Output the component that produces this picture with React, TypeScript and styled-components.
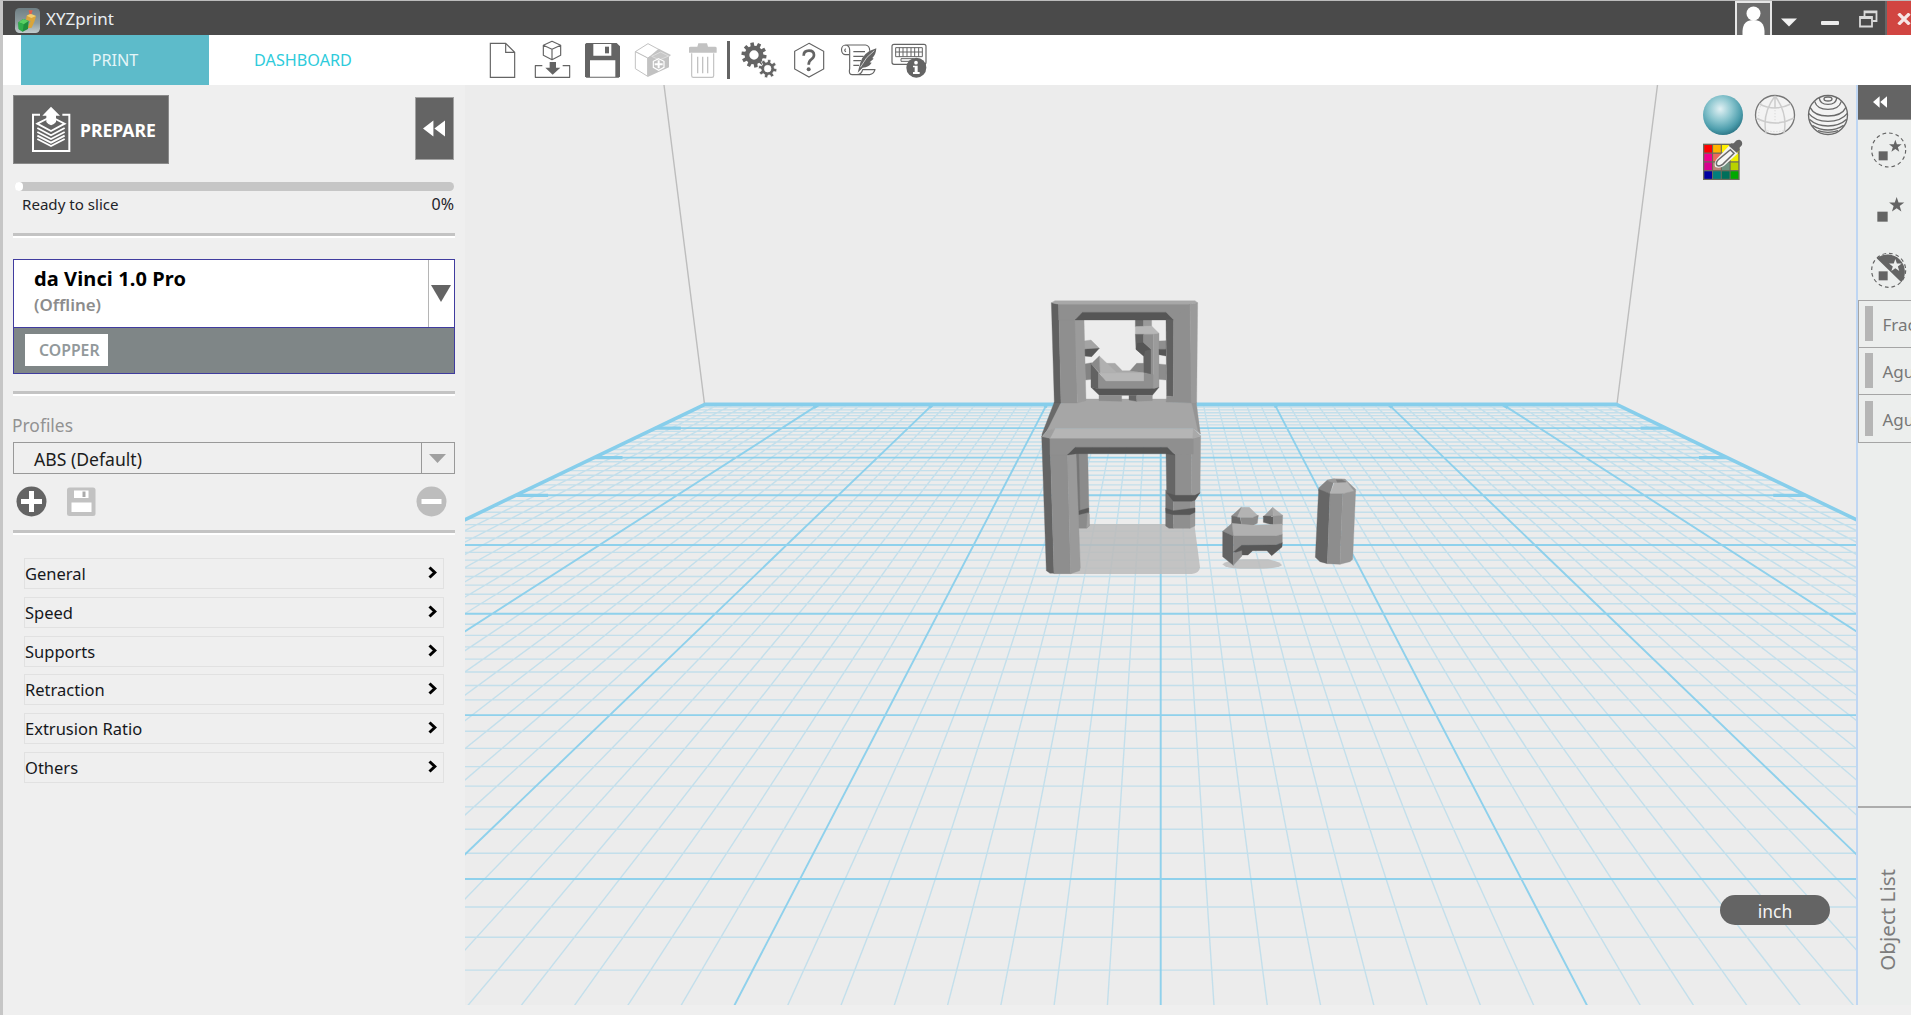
import React from 'react';
import styled, { createGlobalStyle } from 'styled-components';

const GlobalStyle = createGlobalStyle`
  * { box-sizing: border-box; }
  body { margin: 0; background: #efefef; overflow: hidden; }
`;

const FONT = '"Noto Sans", "Open Sans", Lato, sans-serif';
const INK = '#646464';
const FAINT = '#c2c2c2';

const Window = styled.div`
  display: flex;
  flex-direction: column;
  width: 1911px;
  height: 1015px;
  overflow: hidden;
  border-left: 3px solid #c6c6c6;
  border-top: 1px solid #bcbcbc;
  background: #efefef;
  font-family: ${FONT};
  white-space: nowrap;
`;

/* ---------- title bar ---------- */

const TitleBar = styled.header`
  display: flex;
  flex: none;
  height: 34px;
  padding-left: 12px;
  background: #4a4a4a;
`;

const AppTitle = styled.h1`
  flex: 1;
  margin: 0 0 0 6px;
  font-size: 17px;
  font-weight: 400;
  line-height: 36px;
  color: #e9eef2;
`;

const AppLogo = styled.svg`
  width: 25px;
  height: 25px;
  margin-top: 7px;
`;

const Avatar = styled.svg`
  width: 37px;
  height: 34px;
`;

const WindowButton = styled.button<{ $w: number; $close?: boolean; $pad?: string }>`
  display: flex;
  align-items: center;
  justify-content: ${p => (p.$close ? 'flex-start' : 'center')};
  flex: none;
  width: ${p => p.$w}px;
  height: 34px;
  padding: ${p => p.$pad ?? '0'};
  border: 0;
  border-left: ${p => (p.$close ? '2px solid #666' : '0')};
  background: ${p => (p.$close ? '#d14541' : 'transparent')};
  svg { flex: none; }
`;

/* ---------- navigation and toolbar ---------- */

const NavBar = styled.nav`
  display: flex;
  flex: none;
  height: 50px;
  padding-left: 18px;
  background: #fff;
`;

const Tab = styled.button<{ $active?: boolean }>`
  width: 188px;
  height: 50px;
  padding: 1px 0 0;
  border: 0;
  font-family: ${FONT};
  font-size: 16.2px;
  line-height: 49px;
  background: ${p => (p.$active ? '#5dbbca' : '#fff')};
  color: ${p => (p.$active ? '#e4f5f8' : '#2ecbdb')};
`;

const Toolbar = styled.div`
  display: flex;
  margin-left: 80px;
`;

const ToolIcon = styled.svg`
  flex: none;
  width: 50px;
  height: 50px;
`;

const ToolSeparator = styled.span`
  width: 3px;
  height: 38px;
  margin: 6px 4px 0 0;
  background: ${INK};
`;

/* ---------- body ---------- */

const Body = styled.main`
  display: flex;
  flex: none;
  height: 920px;
`;

const Sidebar = styled.aside`
  flex: none;
  width: 462px;
  padding: 10px 10px 0;
  background: #efefef;
`;

const ActionRow = styled.div`
  display: flex;
  justify-content: space-between;
  height: 69px;
  padding-right: 1px;
`;

const PrepareButton = styled.button`
  display: flex;
  width: 156px;
  height: 69px;
  padding: 0;
  border: 1px solid #8a8a8a;
  background: ${INK};
  color: #fff;
  font-family: ${FONT};
  font-size: 17.6px;
  font-weight: 700;
  line-height: 68px;
  svg { flex: none; width: 66px; height: 67px; }
`;

const CollapseButton = styled.button`
  display: flex;
  align-items: center;
  justify-content: center;
  width: 39px;
  height: 63px;
  margin-top: 2px;
  padding: 0 1px 0 0;
  border: 1px solid #a2a2a2;
  background: ${INK};
`;

const ProgressTrack = styled.div`
  height: 9px;
  margin: 18px 1px 0 2px;
  border-radius: 5px;
  background: #c6c6c6;
`;

const ProgressValue = styled.div`
  width: 8px;
  height: 9px;
  border-radius: 4px;
  background: #fff;
`;

const StatusRow = styled.div`
  display: flex;
  justify-content: space-between;
  height: 26px;
  padding: 0 1px 0 9px;
  font-size: 15.1px;
  line-height: 27px;
  color: #1f2429;
  b { font-weight: 400; font-size: 16px; }
`;

const Divider = styled.hr<{ $top: number }>`
  height: 5px;
  margin: ${p => p.$top}px 0 0;
  border: 0;
  border-top: 3px solid #c3c3c3;
  background: #fff;
`;

const PrinterCard = styled.section`
  margin-top: 21px;
  border: 1px solid #403c9f;
`;

const PrinterPick = styled.div`
  display: flex;
  height: 68px;
  border-bottom: 1px solid #403c9f;
  background: #fff;
`;

const PrinterLabel = styled.div`
  flex: 1;
  padding: 7px 0 0 20px;
`;

const PrinterName = styled.div`
  font-size: 20px;
  font-weight: 700;
  line-height: 24px;
  letter-spacing: 0.1px;
  color: #000;
`;

const PrinterState = styled.div`
  font-size: 16.9px;
  font-weight: 600;
  line-height: 28px;
  color: #8c8c8c;
`;

const DropArrow = styled.span<{ $w: number; $tone: string; $line: string }>`
  display: flex;
  align-items: center;
  justify-content: center;
  width: ${p => p.$w}px;
  padding-right: 2px;
  border-left: 1px solid ${p => p.$line};
  color: ${p => p.$tone};
`;

const MaterialBar = styled.div`
  height: 45px;
  padding: 6px 0 0 11px;
  background: #7f8687;
`;

const MaterialChip = styled.span`
  display: block;
  width: 83px;
  height: 32px;
  padding-left: 14px;
  background: #fff;
  font-size: 15.8px;
  font-weight: 600;
  line-height: 33px;
  color: #92999b;
`;

const FieldLabel = styled.label`
  display: block;
  margin: 15px 0 3px -1px;
  font-size: 17.4px;
  line-height: 28px;
  color: #929292;
`;

const ProfileSelect = styled.div`
  display: flex;
  height: 32px;
  border: 1px solid #999;
`;

const ProfileValue = styled.span`
  flex: 1;
  padding-left: 20px;
  font-size: 17.6px;
  line-height: 32px;
  color: #1c1c1c;
`;

const ProfileActions = styled.div`
  display: flex;
  height: 31px;
  margin-top: 12px;
  padding: 0 8px 0 3px;
  svg { flex: none; width: 31px; height: 31px; }
  svg:nth-child(2) { margin-left: 19px; }
  svg:last-child { margin-left: auto; }
`;

const SettingList = styled.div`
  display: flex;
  flex-direction: column;
  gap: 7.75px;
  margin-top: 23px;
  padding: 0 11px;
`;

const SettingRow = styled.button`
  display: flex;
  align-items: center;
  justify-content: space-between;
  height: 31px;
  padding: 1px 6px 0 0;
  border: 1px solid #e1e1e1;
  background: #efefef;
  font-family: ${FONT};
  font-size: 16.5px;
  line-height: 28px;
  color: #16181c;
  svg { margin-top: -3px; }
`;

/* ---------- viewport ---------- */

const Viewport = styled.section`
  position: relative;
  flex: 1;
  overflow: hidden;
  background: #ececec;
`;

const Scene = styled.svg`
  display: block;
  width: 1391px;
  height: 920px;
`;

const ViewModes = styled.div`
  position: absolute;
  top: 9px;
  left: 1236.5px;
  display: grid;
  grid-template-columns: repeat(3, 52.5px);
  grid-template-rows: 43px 46px;
  svg { width: 42px; height: 42px; }
  svg:last-child { height: 44px; }
`;

const UnitToggle = styled.button`
  position: absolute;
  left: 1255px;
  top: 810px;
  width: 110px;
  height: 30px;
  padding: 1px 0 0;
  border: 0;
  border-radius: 15px;
  background: ${INK};
  font-family: ${FONT};
  font-size: 17.4px;
  line-height: 30px;
  color: #f4f4f4;
`;

/* ---------- object panel ---------- */

const ObjectPanel = styled.aside`
  display: flex;
  flex-direction: column;
  flex: none;
  width: 55px;
  overflow: hidden;
  border-left: 2px solid #bfd6f3;
  background: #eceeed;
`;

const PanelHeader = styled.div`
  display: flex;
  align-items: center;
  height: 35px;
  padding-left: 15px;
  flex: none;
  background: ${INK};
  border-bottom: 1px solid #8f8f8f;
`;

const SelectIcon = styled.svg`
  flex: none;
  width: 53px;
  height: 60px;
`;

const ObjectItems = styled.ul`
  flex: 1;
  margin: 0;
  padding: 0;
  list-style: none;
`;

const ObjectItem = styled.li<{ $first?: boolean }>`
  display: flex;
  align-items: center;
  height: 47.5px;
  padding-left: 6px;
  border-left: 1px solid #a5a5a5;
  border-bottom: 1px solid #a5a5a5;
  box-shadow: ${p => (p.$first ? 'inset 0 1px #a5a5a5' : 'none')};
  font-size: 17px;
  line-height: 40px;
  color: #777;
  &::before {
    content: '';
    flex: none;
    width: 8px;
    height: 35px;
    margin-right: 9.5px;
    background: #b5b5b5;
  }
`;

const ObjectName = styled.span`
  padding-top: 3px;
`;

const PanelFooter = styled.div`
  display: flex;
  align-items: center;
  height: 199px;
  padding: 27px 0 0 16px;
  border-top: 2px solid #acacac;
`;

const PanelTitle = styled.span`
  writing-mode: vertical-rl;
  transform: rotate(180deg);
  font-size: 20.6px;
  line-height: 26px;
  color: #7c7c7c;
`;

/* ---------- drawing helpers ---------- */

const gear = (cx: number, cy: number, r: number, ri: number, n: number, turn = 0) => {
  const pts: string[] = [];
  for (let i = 0; i < n; i++) {
    const a = (i / n) * Math.PI * 2 + turn;
    const s = (Math.PI * 2) / n;
    [[-0.32, ri], [-0.22, r], [0.22, r], [0.32, ri]].forEach(([o, q]) => {
      pts.push(`${(cx + Math.cos(a + o * s) * q).toFixed(1)},${(cy + Math.sin(a + o * s) * q).toFixed(1)}`);
    });
  }
  return `M${pts.join('L')}Z`;
};
const hole = (cx: number, cy: number, r: number) =>
  `M${cx - r},${cy}a${r},${r} 0 1 0 ${r * 2},0a${r},${r} 0 1 0 ${-r * 2},0Z`;

const star = (cx: number, cy: number, r: number) =>
  Array.from({ length: 10 }, (_, i) => {
    const q = i % 2 ? r * 0.4 : r;
    const a = -Math.PI / 2 + (i * Math.PI) / 5;
    return `${(cx + q * Math.cos(a)).toFixed(1)},${(cy + q * Math.sin(a)).toFixed(1)}`;
  }).join(' ');

/* Perspective of the build plate: depth k runs from the rear edge, m sideways from the centre. */
const py = (k: number) => 185.1 + 2243.5 / (10.233 - k);
const px = (m: number, k: number) => 1160.7 + (m * 1166) / (10.233 - k);
const NEAR = 7.6;

function BuildPlate() {
  const minor: string[] = [];
  const major: string[] = [];
  for (let i = 1; i / 8 < NEAR; i++) {
    const k = i / 8;
    (i % 8 ? minor : major).push(`M${px(-4, k)},${py(k)}H${px(4, k)}`);
  }
  for (let i = -31; i < 32; i++) {
    const m = i / 8;
    (i % 8 ? minor : major).push(`M${px(m, 0)},${py(0)}L${px(m, NEAR)},${py(NEAR)}`);
  }
  const stubs = [1, 2, 3].map(k => `M${px(-4, k)},${py(k)}H${px(-3.8, k)}M${px(4, k)},${py(k)}H${px(3.8, k)}`);
  const ticks = [-3, -2, -1, 0, 1, 2, 3].map(m => `M${px(m, 0)},${py(0)}L${px(m, 0.15)},${py(0.15)}`);
  return (
    <g fill="none">
      <path d="M664,85L704.5,404M1657.5,85L1617,404" stroke="#bdbdbd" strokeWidth="1.4" />
      <path d={minor.join('')} stroke="#87ceeb" strokeOpacity=".4" strokeWidth="1.4" />
      <path d={major.join('')} stroke="#87ceeb" strokeOpacity=".92" strokeWidth="1.9" />
      <path d={stubs.join('') + ticks.join('')} stroke="#87ceeb" strokeWidth="3.2" />
      <path
        d={`M${px(-4, 4)},${py(4)}L${px(-4, 0)},${py(0)}H${px(4, 0)}L${px(4, 4)},${py(4)}`}
        stroke="#87ceeb"
        strokeWidth="3.6"
        strokeLinejoin="round"
      />
    </g>
  );
}

type Face = [fill: string, points: string];

const MODEL: Face[] = [
  // rear legs
  ['#8b8b8b', '168,515 203,515 208,738 200,745 172,745'],
  ['#767676', '168,515 176,515 180,690 172,690'],
  ['#a0a0a0', '203,700 208,703 208,738 200,743'],
  ['#5a5a5a', '176,692 206,684 206,697 176,704'],
  ['#707070', '437,630 460,640 460,745 447,745 437,738'],
  ['#8f8f8f', '460,640 510,640 510,745 460,745'],
  ['#989898', '510,640 525,640 525,738 510,745'],
  ['#575757', '437,685 460,692 525,684 525,697 510,704 460,704 438,699'],
  // front right leg
  ['#8f8f8f', '465,470 515,470 515,650 465,650'],
  ['#989898', '515,470 542,468 540,640 527,650 515,650'],
  ['#666666', '438,518 465,522 465,650 440,640'],
  ['#575757', '440,638 465,646 525,646 540,638 525,661 515,664 460,664'],
  // front left leg
  ['#646464', '65,468 90,474 102,880 90,880 79,872'],
  ['#8e8e8e', '90,474 142,474 152,881 102,881'],
  ['#9a9a9a', '142,522 168,518 181,862 179,872 152,881'],
  // apron
  ['#8f8f8f', '90,474 520,474 520,522 465,524 442,502 165,502 142,525 90,525'],
  ['#565656', '142,525 165,502 442,502 465,525 438,521 170,521'],
  // seat
  ['#6a6a6a', '103,366 124,368 90,440 66,470 66,462'],
  ['#a6a6a6', '122,370 172,366 197,357 440,357 440,366 515,368 525,372 541,462 520,446 105,446 78,458'],
  ['#959595', '515,368 529,368 541,462 534,452'],
  ['#b5b5b5', '105,446 520,446 542,468 518,475 90,475 78,468'],
  ['#9f9f9f', '66,470 82,452 105,446 90,475'],
  ['#a9a9a9', '520,446 542,468 518,475'],
  // lattice in the back rest
  ['#a4a4a4', '191,183 213,180 238,205 191,208'],
  ['#565656', '191,208 238,205 215,230 191,228'],
  ['#838383', '194,252 215,248 215,298 196,300'],
  ['#a8a8a8', '240,250 285,250 307,272 330,272 371,278 371,303 250,303'],
  ['#878787', '330,272 350,250 371,250 371,278'],
  ['#6b6b6b', '346,115 371,115 371,140 346,140'],
  ['#9a9a9a', '371,115 395,115 395,140 371,140'],
  ['#b7b7b7', '346,140 395,138 417,160 400,163 346,163'],
  ['#616161', '346,163 371,163 371,188 393,208 393,285 371,278 371,228 348,208'],
  ['#565656', '352,190 371,188 393,208 375,212 371,228 348,208'],
  ['#8f8f8f', '371,163 400,163 400,325 393,325 393,208 371,188'],
  ['#9b9b9b', '400,163 417,160 417,322 400,325'],
  ['#8f8f8f', '417,183 438,182 438,208 417,208'],
  ['#565656', '417,208 438,208 438,228 417,224'],
  ['#8c8c8c', '417,252 438,254 438,300 417,298'],
  ['#626262', '213,250 236,278 236,326 213,322'],
  ['#8f8f8f', '236,278 258,303 371,303 371,278 400,284 400,326 236,326'],
  ['#b7b7b7', '237,278 290,278 371,278 371,303 258,303'],
  ['#b0b0b0', '238,228 290,278 240,278'],
  ['#8a8a8a', '238,228 240,280 213,252'],
  ['#565656', '213,322 236,326 400,326 417,322 397,346 238,346'],
  ['#8d8d8d', '237,346 305,346 305,364 237,362'],
  ['#666666', '327,346 350,346 350,364 327,360'],
  ['#929292', '350,346 397,346 397,362 350,364'],
  // back rest frame
  ['#606060', '94,68 116,72 123,369 103,369'],
  ['#8f8f8f', '116,72 167,72 172,369 123,369'],
  ['#9b9b9b', '165,119 192,118 198,362 172,369'],
  ['#8f8f8f', '116,72 510,72 510,119 461,119 438,97 187,97 165,120 116,120'],
  ['#a8a8a8', '94,68 105,62 525,62 533,68 510,73 116,73'],
  ['#565656', '165,120 187,97 438,97 461,120'],
  ['#606060', '438,119 461,119 460,350 440,348'],
  ['#8f8f8f', '461,118 510,72 516,369 438,366 440,348 460,350'],
  ['#9a9a9a', '510,73 533,68 530,369 514,369'],
  // small bracket
  ['#b3b3b3', '635,708 664,682 688,682 715,708 695,713 660,713'],
  ['#8f8f8f', '635,708 664,682 650,713'],
  ['#686868', '635,708 660,713 665,735 635,732'],
  ['#8a8a8a', '662,713 697,713 715,706 712,730 697,737 665,735'],
  ['#9b9b9b', '730,710 758,682 760,709'],
  ['#ababab', '758,682 788,706 760,710'],
  ['#5f5f5f', '730,708 760,709 760,735 730,727'],
  ['#929292', '760,709 788,706 787,735 760,737'],
  ['#b0b0b0', '636,730 700,736 787,732 787,763 768,768 640,768'],
  ['#8d8d8d', '608,754 636,730 640,768'],
  ['#636363', '608,754 640,768 640,856 608,830'],
  ['#8b8b8b', '640,768 768,768 787,763 787,790 765,796 665,797 640,816'],
  ['#575757', '640,816 665,796 768,795 787,788 786,801 755,827 741,812 698,812 684,825 662,825'],
  ['#8e8e8e', '640,820 665,812 666,828 640,856'],
  // pillar
  ['#858585', '896,624 922,600 945,597 940,608 930,641 896,632'],
  ['#b3b3b3', '945,604 978,603 1005,632 1000,637 968,641 930,641'],
  ['#9a9a9a', '922,602 940,596 975,597 980,606 940,608'],
  ['#7c7c7c', '948,599 966,599 978,606 952,607'],
  ['#959595', '975,598 1007,628 1005,636'],
  ['#666666', '896,628 930,641 922,851 900,845 886,832'],
  ['#8d8d8d', '930,641 968,641 960,853 922,851'],
  ['#979797', '968,641 1007,632 998,838 990,845 960,853'],
];

function SceneView() {
  return (
    <Scene viewBox="465 85 1391 920">
      <BuildPlate />
      <g transform="translate(1020 280) scale(.33333)">
        <path d="M180,732H523L540,862Q538,880 515,882H100Z" fill="#bcbcbc" opacity=".86" />
        <path d="M607,853Q625,840 670,838H745Q782,845 786,856Q770,866 720,866H660Q620,866 607,853Z" fill="#bcbcbc" opacity=".86" />
        {MODEL.map(([fill, points], i) => (
          <polygon key={i} points={points} fill={fill} stroke={fill} strokeWidth="1" strokeLinejoin="round" />
        ))}
      </g>
    </Scene>
  );
}

function Tools() {
  return (
    <Toolbar>
      <ToolIcon viewBox="21 15 150 150">
        <path d="M61,40H107L134,67V142H61ZM107,40V67H134" fill="#fff" stroke={INK} strokeWidth="3.5" />
      </ToolIcon>
      <ToolIcon viewBox="171 15 150 150">
        <g fill="none" stroke={INK} strokeWidth="3.5" strokeLinejoin="round">
          <path d="M246,34L272,46V76L246,89L220,76V46ZM220,46L246,58L272,46M246,58V89" />
          <path d="M217,107H196V142H299V107H278" />
        </g>
        <path d="M239,96H258V113H271L248,134L226,113H239Z" fill={INK} />
      </ToolIcon>
      <ToolIcon viewBox="321 15 150 150">
        <path d="M349,39H440L450,49V139L446,143H349L345,139V43Z" fill={INK} />
        <path d="M370,42H424V77H370ZM360,91H436V140H360Z" fill="#fff" />
        <path d="M405,50H417V70H405Z" fill={INK} />
      </ToolIcon>
      <ToolIcon viewBox="471 15 150 150">
        <path d="M534,41L573,62L533,84L496,65Z" fill="#fff" stroke={FAINT} strokeWidth="3" />
        <path d="M496,65L533,84V139L496,116Z" fill="#fff" stroke={FAINT} strokeWidth="3" />
        <path d="M566,56L603,75L597,80L597,112L533,141V84Z" fill={FAINT} />
        <path d="M545,79L572,66L596,78L568,90Z" fill="#c8c8c8" stroke="#e8e8e8" strokeWidth="2" />
        <path d="M566,86L582,94V112L566,121L550,112V94Z" fill={FAINT} stroke="#fff" strokeWidth="3.5" />
        <path d="M566,91V115M554,103H578" stroke="#fff" strokeWidth="6" />
      </ToolIcon>
      <ToolIcon viewBox="621 15 150 150">
        <path d="M657,53Q657,50 662,50H682L685,40H711L714,50H735Q740,50 740,54V68H657Z" fill={FAINT} />
        <path d="M665,70V137Q665,142 670,142H726Q731,142 731,137V70" fill="none" stroke={FAINT} strokeWidth="3.5" />
        <path d="M683,80V130M698,80V130M713,80V130" stroke={FAINT} strokeWidth="4" />
      </ToolIcon>
      <ToolSeparator />
      <ToolIcon viewBox="791 15 150 150">
        <path d={gear(851, 75, 38, 28, 10, 0.15) + hole(851, 75, 14)} fill={INK} fillRule="evenodd" />
        <path d={gear(892, 116, 28, 20, 8, 0.2) + hole(892, 116, 10)} fill={INK} stroke="#fff" strokeWidth="2" fillRule="evenodd" />
      </ToolIcon>
      <ToolIcon viewBox="941 15 150 150">
        <path d="M1016,40L1060,64V117L1016,141L973,117V64Z" fill="none" stroke={INK} strokeWidth="3.5" />
        <path d="M1000,77Q1000,62 1016,62Q1031,62 1031,75Q1031,83 1023,88Q1015,93 1015,104" fill="none" stroke={INK} strokeWidth="8" />
        <circle cx="1015" cy="118" r="6" fill={INK} />
      </ToolIcon>
      <ToolIcon viewBox="1091 15 150 150">
        <g fill="none" stroke={INK} strokeWidth="3.5" strokeLinejoin="round">
          <path d="M1186,45H1126A12,14 0 1 0 1126,74H1136M1126,45Q1138,47 1138,60V116Q1134,133 1145,134H1198Q1210,132 1214,119H1177Q1174,133 1160,134M1186,45Q1198,47 1198,62" />
          <path d="M1126,56Q1120,62 1127,65M1149,65H1184M1149,79H1180M1149,92H1172M1149,106H1166" />
        </g>
        <path d="M1218,55Q1180,66 1170,98L1162,128L1177,113Q1196,112 1204,98L1198,97L1210,86L1206,84Q1217,74 1218,55Z" fill={INK} />
        <path d="M1212,62Q1188,78 1170,112" stroke="#fff" strokeWidth="2" fill="none" />
      </ToolIcon>
      <ToolIcon viewBox="1241 15 150 150">
        <rect x="1265" y="43" width="102" height="60" rx="6" fill="#fff" stroke={INK} strokeWidth="3.5" />
        <path d="M1276,53H1356V80H1276ZM1276,66H1356M1287,53V80M1298,53V80M1310,53V80M1322,53V80M1333,53V80M1345,53V80" fill="none" stroke={INK} strokeWidth="3" />
        <path d="M1292,86H1330V94H1292Z" fill="none" stroke={INK} strokeWidth="3" />
        <circle cx="1338" cy="113" r="30" fill={INK} />
        <circle cx="1337" cy="98" r="5.5" fill="#fff" />
        <path d="M1328,107H1342V126H1348V132H1328V126H1333V112H1328Z" fill="#fff" />
      </ToolIcon>
    </Toolbar>
  );
}

const SWATCHES = [
  '#ff0000', '#ffb400', '#fff000', '#fff700',
  '#ee008c', '#ea6b5c', '#d8b090', '#eef000',
  '#d9008f', '#b98478', '#6f9280', '#b9d200',
  '#0000a0', '#007f7c', '#006f5a', '#00a800',
];

function ViewModeIcons() {
  return (
    <ViewModes>
      <svg viewBox="124 282 126 126">
        <defs>
          <radialGradient id="ball" cx=".43" cy=".35" r=".66">
            <stop offset="0" stopColor="#e2f1f4" />
            <stop offset=".45" stopColor="#8cc6cf" />
            <stop offset=".8" stopColor="#4c9dac" />
            <stop offset="1" stopColor="#2f7888" />
          </radialGradient>
        </defs>
        <circle cx="187" cy="345" r="60" fill="url(#ball)" />
      </svg>
      <svg viewBox="282 282 126 126">
        <circle cx="345" cy="345" r="58.5" fill="#f3f3f3" stroke="#777" strokeWidth="4" />
        <g fill="none" stroke="#ccc" strokeWidth="4.5">
          <path d="M298,312Q345,336 392,312M288,354Q345,384 402,354M345,288Q306,340 318,400M345,288Q384,340 372,400M345,288V326" />
          <path d="M305,310Q290,340 300,376M345,330V372M322,392Q345,398 370,392" strokeDasharray="4 5" strokeWidth="2" />
        </g>
      </svg>
      <svg viewBox="440 282 126 126">
        <circle cx="503" cy="345" r="58.5" fill="#f3f3f3" stroke="#6a6a6a" strokeWidth="4" />
        <g fill="none" stroke="#6a6a6a" strokeWidth="4">
          <ellipse cx="503" cy="297" rx="12" ry="6" />
          <path d="M477,293Q478,313 503,313Q528,313 529,293M463,304Q470,328 503,328Q536,328 543,304M449,322Q462,348 503,348Q544,348 557,322M445,340Q464,364 503,364Q542,364 561,340M447,358Q468,378 503,378Q538,378 559,358M456,376Q478,390 503,390Q528,390 550,376M473,392Q503,402 533,392" />
        </g>
      </svg>
      <svg viewBox="124 412 126 132">
        <rect x="127" y="432" width="110" height="109" fill="#6b6b5a" />
        {SWATCHES.map((c, i) => (
          <rect key={i} x={131 + (i % 4) * 26.3} y={436 + Math.floor(i / 4) * 26.3} width="23" height="22.5" fill={c} />
        ))}
        <path d="M207,436L232,461L190,499Q176,508 164,502Q158,492 168,478Z" fill="#f1f1ee" />
        <path d="M209,450L220,461L186,494Q176,502 169,497Q164,490 172,481Z" fill="#f6f6f4" stroke="#6a6a6a" strokeWidth="4.5" />
        <path d="M204,438L212,431Q216,433 220,430Q226,420 236,420Q247,424 244,436Q240,442 234,445L237,450L228,459Z" fill={INK} />
      </svg>
    </ViewModes>
  );
}

const Rewind = ({ w, h, fill = '#fff' }: { w: number; h: number; fill?: string }) => (
  <svg width={w} height={h} viewBox="0 0 22 18" preserveAspectRatio="none">
    <path d="M10.4,0.5V17.5L0,9ZM22,0.5V17.5L11.4,9Z" fill={fill} />
  </svg>
);

const Triangle = ({ w, h }: { w: number; h: number }) => (
  <svg width={w} height={h} viewBox="0 0 20 16" preserveAspectRatio="none">
    <path d="M0,0H20L10,16Z" fill="currentColor" />
  </svg>
);

const SETTINGS = ['General', 'Speed', 'Supports', 'Retraction', 'Extrusion Ratio', 'Others'];
const OBJECTS = ['Frac', 'Agu', 'Agu'];

export default function App() {
  return (
    <>
      <GlobalStyle />
      <Window>
        <TitleBar>
          <AppLogo viewBox="45 23 75 75">
            <defs>
              <linearGradient id="tile" x1="0" y1="0" x2="0" y2="1">
                <stop offset="0" stopColor="#6f7f84" />
                <stop offset=".6" stopColor="#8f9da0" />
                <stop offset="1" stopColor="#c2cccd" />
              </linearGradient>
            </defs>
            <rect x="45" y="23" width="75" height="75" rx="14" fill="url(#tile)" />
            <path d="M80,46L90,40L108,48L104,62L95,82L82,84L92,62L78,60Z" fill="#d9a53a" />
            <path d="M80,46L92,40L108,47L94,53Z" fill="#f0cf72" />
            <path d="M86,30L98,30L94,42L88,40Z" fill="#e2604a" />
            <path d="M55,66L70,56L86,62L84,86L68,94L56,86Z" fill="#1f8f3c" />
            <path d="M55,66L70,56L86,62L71,72Z" fill="#59cf63" />
            <path d="M55,66L71,72L68,94L56,86Z" fill="#2fae4a" />
          </AppLogo>
          <AppTitle>XYZprint</AppTitle>
          <Avatar viewBox="0 0 37 34">
            <rect x="1" y="1" width="35" height="34" fill="#6b6b6b" stroke="#e6e6e6" strokeWidth="2" />
            <circle cx="18.5" cy="12.5" r="7" fill="#fff" />
            <path d="M7.5,34V30Q8,19 18.5,19Q29,19 29.5,30V34Z" fill="#fff" />
          </Avatar>
          <WindowButton $w={34} $pad="8px 0 0">
            <svg width="16" height="9" viewBox="0 0 16 9"><path d="M0,0.5H16L8,8.5Z" fill="#f2f2f2" /></svg>
          </WindowButton>
          <WindowButton $w={48} $pad="10px 0 0">
            <svg width="18" height="4"><rect width="18" height="4" rx="1" fill="#ececec" /></svg>
          </WindowButton>
          <WindowButton $w={31} $pad="1px 3px 0 0">
            <svg width="19" height="18" viewBox="0 0 19 18" fill="none" stroke="#d9d9d9" strokeWidth="1.8">
              <path d="M5.5,6V1.5H17.5V11H13.5M5.5,2.4H17.5" />
              <path d="M1,7H13V16.5H1ZM1,8H13" />
            </svg>
          </WindowButton>
          <WindowButton $w={26} $close $pad="1px 0 0 10px">
            <svg width="14" height="12" viewBox="0 0 14 12"><path d="M1.5,0.5L12.5,11.5M12.5,0.5L1.5,11.5" stroke="#f6e6e6" strokeWidth="3.2" /></svg>
          </WindowButton>
        </TitleBar>

        <NavBar>
          <Tab $active>PRINT</Tab>
          <Tab>DASHBOARD</Tab>
          <Tools />
        </NavBar>

        <Body>
          <Sidebar>
            <ActionRow>
              <PrepareButton>
                <svg viewBox="42 288 198 201">
                  <g fill="none" stroke="#fff" strokeWidth="5.5">
                    <path d="M120,344H99V453H208V344H187" strokeWidth="6" />
                    <path d="M112,371L153,350L194,371L153,393Z" />
                    <path d="M112,384L153,406L194,384M112,396L153,417L194,396M112,407L153,428L194,407M112,417L153,438L194,417" />
                  </g>
                  <path d="M153,320L180,347H168V366Q153,385 139,366V347H127Z" fill="#fff" />
                </svg>
                PREPARE
              </PrepareButton>
              <CollapseButton>
                <Rewind w={22} h={17} />
              </CollapseButton>
            </ActionRow>
            <ProgressTrack>
              <ProgressValue />
            </ProgressTrack>
            <StatusRow>
              <span>Ready to slice</span>
              <b>0%</b>
            </StatusRow>
            <Divider $top={16} />

            <PrinterCard>
              <PrinterPick>
                <PrinterLabel>
                  <PrinterName>da Vinci 1.0 Pro</PrinterName>
                  <PrinterState>(Offline)</PrinterState>
                </PrinterLabel>
                <DropArrow $w={26} $tone={INK} $line="#b5b5b5">
                  <Triangle w={20} h={17} />
                </DropArrow>
              </PrinterPick>
              <MaterialBar>
                <MaterialChip>COPPER</MaterialChip>
              </MaterialBar>
            </PrinterCard>
            <Divider $top={17} />

            <FieldLabel>Profiles</FieldLabel>
            <ProfileSelect>
              <ProfileValue>ABS (Default)</ProfileValue>
              <DropArrow $w={33} $tone="#a0a0a0" $line="#999">
                <Triangle w={17} h={9} />
              </DropArrow>
            </ProfileSelect>
            <ProfileActions>
              <svg viewBox="0 0 31 31">
                <circle cx="15.5" cy="15.5" r="15" fill={INK} />
                <path d="M15.5,5V26M5,15.5H26" stroke="#fff" strokeWidth="5" />
              </svg>
              <svg viewBox="0 0 31 31">
                <rect x="1" y="1.5" width="28.5" height="28.5" rx="2.5" fill={FAINT} />
                <path d="M8,4.5H22.5V12H8ZM5.5,16.5H25.5V26H5.5Z" fill="#fff" />
                <path d="M16.5,5.5H19.5V11H16.5Z" fill="#aaa" />
              </svg>
              <svg viewBox="0 0 31 31">
                <circle cx="15.5" cy="15.5" r="15" fill="#bdbdbd" />
                <path d="M5.5,15.5H25.5" stroke="#fff" strokeWidth="5" />
              </svg>
            </ProfileActions>
            <Divider $top={13} />

            <SettingList>
              {SETTINGS.map(name => (
                <SettingRow key={name}>
                  <span>{name}</span>
                  <svg width="9" height="13" viewBox="0 0 9 13">
                    <path d="M1.5,1.5L6.8,6.5L1.5,11.5" fill="none" stroke="#000" strokeWidth="3" />
                  </svg>
                </SettingRow>
              ))}
            </SettingList>
          </Sidebar>

          <Viewport>
            <SceneView />
            <ViewModeIcons />
            <UnitToggle>inch</UnitToggle>
          </Viewport>

          <ObjectPanel>
            <PanelHeader>
              <Rewind w={14} h={12} />
            </PanelHeader>
            <SelectIcon viewBox="174 120 159 180">
              <circle cx="266" cy="210" r="51" fill="none" stroke={INK} strokeWidth="3.5" strokeDasharray="11 9" />
              <rect x="236" y="214" width="27" height="27" fill={INK} />
              <polygon points={star(286, 199, 20)} fill={INK} />
            </SelectIcon>
            <SelectIcon viewBox="174 300 159 180">
              <rect x="232" y="395" width="31" height="30" fill={INK} />
              <polygon points={star(290, 375, 24)} fill={INK} />
            </SelectIcon>
            <SelectIcon viewBox="174 480 159 180">
              <circle cx="266" cy="571" r="51" fill="none" stroke={INK} strokeWidth="3.5" strokeDasharray="11 9" />
              <path d="M230,535A52,52 0 0 1 304,607Z" fill={INK} />
              <rect x="233" y="571" width="33" height="33" fill="#eceeed" />
              <rect x="236" y="574" width="27" height="27" fill={INK} />
              <polygon points={star(286, 557, 20)} fill="#eceeed" />
            </SelectIcon>
            <ObjectItems>
              {OBJECTS.map((name, i) => (
                <ObjectItem key={i} $first={i === 0}>
                  <ObjectName>{name}</ObjectName>
                </ObjectItem>
              ))}
            </ObjectItems>
            <PanelFooter>
              <PanelTitle>Object List</PanelTitle>
            </PanelFooter>
          </ObjectPanel>
        </Body>
      </Window>
    </>
  );
}
